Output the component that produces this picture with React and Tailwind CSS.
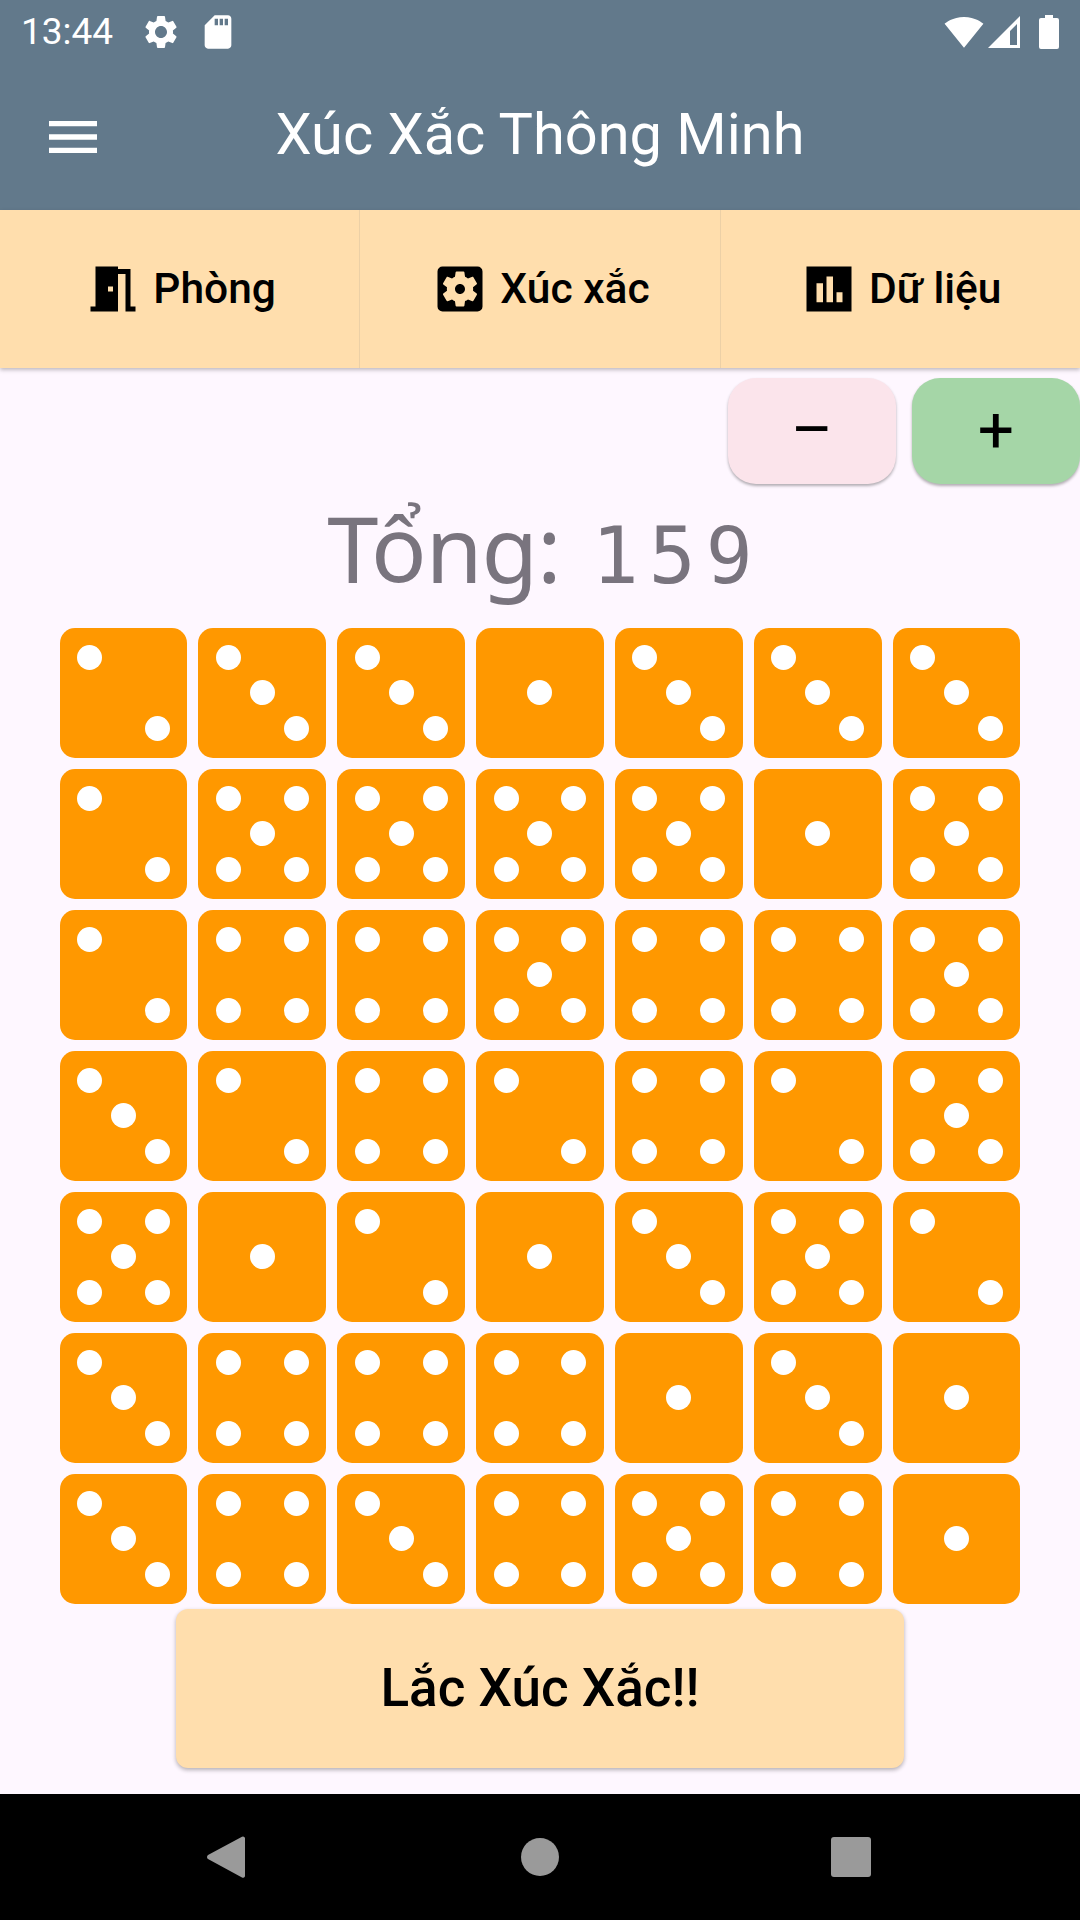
import React from 'react';
import {MdMeetingRoom, MdMenu, MdSdCard, MdSettings, MdSettingsApplications} from 'react-icons/md';

const ROWS = [
  [2, 3, 3, 1, 3, 3, 3],
  [2, 5, 5, 5, 5, 1, 5],
  [2, 4, 4, 5, 4, 4, 5],
  [3, 2, 4, 2, 4, 2, 5],
  [5, 1, 2, 1, 3, 5, 2],
  [3, 4, 4, 4, 1, 3, 1],
  [3, 4, 3, 4, 5, 4, 1],
];

// which cells of the 3x3 grid hold a pip
const PIPS = {
  1: [4],
  2: [0, 8],
  3: [0, 4, 8],
  4: [0, 2, 6, 8],
  5: [0, 2, 4, 6, 8],
  6: [0, 2, 3, 5, 6, 8],
};

// square-cornered chart icon, the package one has rounded corners
const ChartIcon = ({className}) => (
  <svg viewBox="0 0 24 24" className={className} fill="currentColor" fillRule="evenodd">
    <path d="M3 3h18v18H3zM9.6 17.3H7v-7.6h2.6zM13.6 17.3H11V7h2.6zM17.4 17.3H15v-4h2.4z" />
  </svg>
);

const Die = ({value}) => (
  <div className="grid h-[130px] grid-cols-3 grid-rows-3 place-items-center rounded-[15px] bg-[#ff9800] px-[13px] py-[12px]">
    {[0, 1, 2, 3, 4, 5, 6, 7, 8].map((i) => (
      <div key={i} className={PIPS[value].includes(i) ? 'h-[25px] w-[25px] rounded-full bg-white' : ''} />
    ))}
  </div>
);

const StatusBar = () => (
  <div className="flex h-[63px] items-center justify-between px-[21px] text-white">
    <div className="flex items-center">
      <span className="text-[37px] leading-none">13:44</span>
      <MdSettings className="ml-[28px] h-[40px] w-[40px]" />
      <MdSdCard className="ml-[17px] h-[40px] w-[40px]" />
    </div>
    <div className="flex items-center">
      <svg viewBox="0 0 24 24" className="h-[40px] w-[40px]" fill="currentColor">
        <path d="M12.01 21.49L23.64 7c-.45-.34-4.93-4-11.64-4C5.28 3 .81 6.66.36 7l11.63 14.49.01.01.01-.01z" />
      </svg>
      <svg viewBox="0 0 32 32" className="ml-[4px] h-[32px] w-[32px]" fill="white" fillRule="evenodd">
        <path d="M0 32L32 0V32ZM22 15L29 8V29H22Z" />
      </svg>
      <svg viewBox="0 0 20 34" className="ml-[19px] h-[34px] w-[20px]" fill="white">
        <path d="M6 0h8v3h4a2 2 0 0 1 2 2v27a2 2 0 0 1-2 2H2a2 2 0 0 1-2-2V5a2 2 0 0 1 2-2h4z" />
      </svg>
    </div>
  </div>
);

const Tab = ({icon: Icon, label, divider}) => (
  <div className={`flex flex-1 items-center justify-center gap-[10px] ${divider ? 'border-r border-[#ecd0a6]' : ''}`}>
    <Icon className="h-[60px] w-[60px] text-black" />
    <span className="text-[42.5px] font-medium leading-none text-black">{label}</span>
  </div>
);

const App = () => {
  return (
    <div className="relative flex h-[1920px] w-[1080px] flex-col overflow-hidden bg-[#fef7ff] font-['Roboto',sans-serif]">
      <div className="h-[210px] bg-[#62798b]">
        <StatusBar />
        <div className="relative flex h-[147px] items-center justify-center pb-[4px]">
          <MdMenu className="absolute left-[41px] top-[42px] h-[64px] w-[64px] text-white" />
          <h1 className="text-[57.75px] font-normal leading-none text-white">Xúc Xắc Thông Minh</h1>
        </div>
      </div>

      <div className="relative flex h-[158px] bg-[#ffdead] shadow-[0_2px_4px_rgba(0,0,0,0.25)]">
        <Tab icon={MdMeetingRoom} label="Phòng" divider />
        <Tab icon={MdSettingsApplications} label="Xúc xắc" divider />
        <Tab icon={ChartIcon} label="Dữ liệu" />
      </div>

      <div className="mt-[10px] flex justify-end gap-[16px]">
        <button className="flex h-[106px] w-[168px] items-center justify-center rounded-[28px] bg-[#fbe4eb] text-[64px] leading-none text-black shadow-[0_2px_3px_rgba(0,0,0,0.3)]">
          –
        </button>
        <button className="flex h-[106px] w-[168px] items-center justify-center rounded-[28px] bg-[#a5d6a7] text-[64px] leading-none text-black shadow-[0_2px_3px_rgba(0,0,0,0.3)]">
          +
        </button>
      </div>

      <div className="mb-[20px] mt-[4px] flex h-[120px] items-center justify-center text-[#79747e]">
        <div className="flex items-baseline leading-none">
          <span className="font-['Noto_Sans',sans-serif] text-[92px] tracking-[-1px]">Tổng:</span>
          <span className="-mr-[10px] ml-[31px] font-['DejaVu_Sans_Mono',monospace] text-[78px] tracking-[10px]">159</span>
        </div>
      </div>

      <div className="grid grid-cols-7 gap-[11px] px-[59.5px]">
        {ROWS.flat().map((value, i) => (
          <Die key={i} value={value} />
        ))}
      </div>

      <div className="mt-[5px] flex justify-center">
        <button className="h-[159px] w-[728px] rounded-[12px] bg-[#ffdead] text-[53px] font-medium leading-none text-black shadow-[0_2px_4px_rgba(0,0,0,0.3)]">
          Lắc Xúc Xắc!!
        </button>
      </div>

      <div className="mt-auto flex h-[126px] items-center justify-center bg-black">
        <svg viewBox="0 0 38 42" className="absolute left-[207px] top-[1836px] h-[42px] w-[38px]" fill="#9a9a9a">
          <path d="M36 0.5a2 2 0 0 1 2 1.5v38a2 2 0 0 1-3 1.5L1 23a2.5 2.5 0 0 1 0-4L35 0.8z" />
        </svg>
        <div className="h-[38px] w-[38px] rounded-full bg-[#9a9a9a]" />
        <div className="absolute left-[831px] top-[1837px] h-[40px] w-[40px] rounded-[3px] bg-[#9a9a9a]" />
      </div>
    </div>
  );
};

export default App;
